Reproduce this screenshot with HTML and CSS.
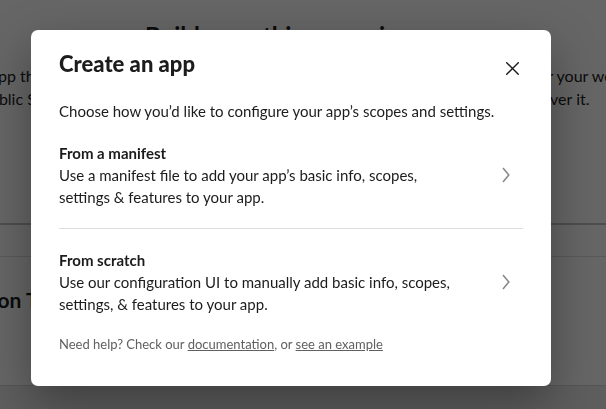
FILE: index.html
```html
<!DOCTYPE html>
<html lang="en">
<head>
<meta charset="utf-8">
<title>Create an app</title>
<link rel="stylesheet" href="styles.css">
</head>
<body>
<div class="page">
  <h1 class="page-title">Build something amazing.</h1>
  <div class="intro">
    <div class="intro-line line-one">
      <span class="frag frag-a">an app that makes people’s working lives better</span>
      <span class="frag">for your workspace or</span>
    </div>
    <div class="intro-line line-two">
      <span class="frag frag-b">public Slack app for the App Directory</span>
      <span class="frag">discover it.</span>
    </div>
  </div>
  <div class="tabs"></div>
  <div class="section">
    <h2 class="section-title">Integration Tools</h2>
  </div>
  <div class="page-footer"></div>
</div>

<div class="scrim"></div>

<div class="modal" role="dialog" aria-labelledby="modal-title">
  <header class="modal-header">
    <h2 class="modal-title" id="modal-title">Create an app</h2>
    <button class="close-btn" aria-label="Close">
      <svg width="13" height="13" viewBox="0 0 13 13" aria-hidden="true">
        <path d="M0.7 0.7 L12.3 12.3 M12.3 0.7 L0.7 12.3" stroke="#1d1c1d" stroke-width="1.4" fill="none" stroke-linecap="round"/>
      </svg>
    </button>
  </header>
  <div class="modal-body">
    <p class="modal-desc">Choose how you’d like to configure your app’s scopes and settings.</p>
    <ul class="options">
      <li class="option">
        <div class="option-text">
          <div class="option-title">From a manifest</div>
          <div class="option-desc">Use a manifest file to add your app’s basic info, scopes, settings &amp; features to your app.</div>
        </div>
        <span class="chevron">
          <svg width="8" height="16" viewBox="0 0 8 16" aria-hidden="true">
            <path d="M1 1 L6.8 8 L1 15" stroke="#868686" stroke-width="1.5" fill="none"/>
          </svg>
        </span>
      </li>
      <li class="option">
        <div class="option-text">
          <div class="option-title">From scratch</div>
          <div class="option-desc">Use our configuration UI to manually add basic info, scopes, settings, &amp; features to your app.</div>
        </div>
        <span class="chevron">
          <svg width="8" height="16" viewBox="0 0 8 16" aria-hidden="true">
            <path d="M1 1 L6.8 8 L1 15" stroke="#868686" stroke-width="1.5" fill="none"/>
          </svg>
        </span>
      </li>
    </ul>
    <p class="modal-help">Need help? Check our <a href="#">documentation</a>, or <a href="#">see an example</a></p>
  </div>
</div>
</body>
</html>
```

FILE: styles.css
```css
* { box-sizing: border-box; }

html, body {
  margin: 0;
  padding: 0;
  height: 100%;
}

body {
  font-family: Lato, "Noto Sans", sans-serif;
  color: #1d1c1d;
  background: #ffffff;
  overflow: hidden;
}

/* ---------- background page ---------- */
.page {
  min-height: 100%;
  display: flex;
  flex-direction: column;
}

.page-title {
  margin: 0;
  padding: 20px 44px 0 0;
  font-size: 24px;
  line-height: 32px;
  font-weight: 700;
  text-align: center;
}

.intro {
  padding-top: 12px;
  font-size: 16px;
  line-height: 23px;
}

.intro-line {
  display: grid;
  white-space: nowrap;
}

.line-one { grid-template-columns: 533px auto; }
.line-two { grid-template-columns: 514px auto; }

.frag { overflow: visible; }
.frag-a { margin-left: -31px; }
.frag-b { margin-left: -19px; }

.tabs {
  margin-top: 113px;
  height: 34px;
  border-top: 2px solid #c4c4c4;
  border-bottom: 1px solid #dedede;
}

.section {
  flex: 0 0 128px;
  padding-top: 29px;
}

.section-title {
  margin: 0;
  margin-left: -82px;
  font-size: 21px;
  line-height: 28px;
  font-weight: 700;
}

.page-footer {
  flex: 1;
  background: #ececec;
  border-top: 1px solid #d6d6d6;
}

/* ---------- overlay ---------- */
.scrim {
  position: fixed;
  inset: 0;
  background: rgba(0, 0, 0, 0.6);
}

.modal {
  position: absolute;
  left: 31px;
  top: 30px;
  width: 520px;
  background: #ffffff;
  border-radius: 7px;
  box-shadow: 0 18px 48px 0 rgba(0, 0, 0, 0.35);
  padding-bottom: 33px;
}

.modal-header {
  display: flex;
  justify-content: space-between;
  align-items: flex-start;
  padding: 20px 28px 0 28px;
}

.modal-title {
  margin: 0;
  font-size: 22px;
  line-height: 28px;
  font-weight: 900;
}

.close-btn {
  width: 36px;
  height: 36px;
  margin: 0 -7px -8px 0;
  border: 0;
  padding: 0;
  background: transparent;
  display: flex;
  align-items: center;
  justify-content: center;
  cursor: pointer;
}

.modal-body {
  padding: 0 28px;
}

.modal-desc {
  margin: 22px 0 0 0;
  font-size: 15px;
  line-height: 22px;
}

.options {
  list-style: none;
  margin: 0;
  padding: 0;
}

.option {
  display: flex;
  align-items: center;
  padding: 20px 0;
  cursor: pointer;
}

.option + .option {
  border-top: 1px solid #dddddd;
}

.option-text {
  flex: 0 0 404px;
  font-size: 15px;
  line-height: 22px;
}

.option-title {
  font-weight: 700;
}

.chevron {
  margin-left: auto;
  margin-right: 13px;
  display: flex;
}

.modal-help {
  margin: 0;
  font-size: 13px;
  line-height: 18px;
  color: #616061;
}

.modal-help a {
  color: #616061;
  text-decoration: underline;
}
```
